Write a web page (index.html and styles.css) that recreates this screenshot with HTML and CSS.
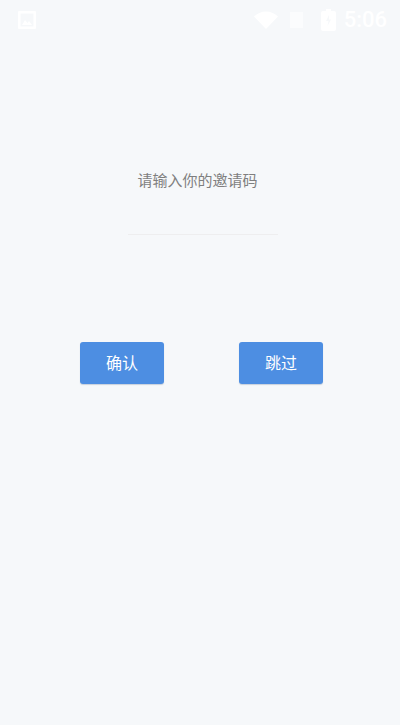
FILE: index.html
```html
<!DOCTYPE html>
<html lang="zh-CN">
<head>
    <meta charset="UTF-8">
    <meta name="viewport" content="width=device-width, initial-scale=1.0">
    <title>邀请码</title>
    <link rel="stylesheet" href="styles.css">
</head>
<body>
    <div class="status-bar">
        <svg class="status-image" width="20" height="20" viewBox="0 0 20 20">
            <path fill="#fff" fill-rule="evenodd" d="M2 1h16a1 1 0 0 1 1 1v16a1 1 0 0 1-1 1H2a1 1 0 0 1-1-1V2a1 1 0 0 1 1-1zm1.500 2.500v13h13v-13z"/>
            <path fill="#fff" d="M5 15l3-5 2.500 3 1.500-2 3 4z"/>
        </svg>
        <div class="status-right">
            <svg class="status-wifi" width="24" height="18" viewBox="0 0 24 18">
                <path fill="#fff" d="M0 5.500C3 2.500 7.500.5 12 .5s9 2 12 5L12 18z"/>
            </svg>
            <svg class="status-sim" width="15" height="18" viewBox="0 0 15 18">
                <path fill="#fff" opacity=".55" d="M1 1h13v16H1z"/>
            </svg>
            <svg class="status-battery" width="15" height="22" viewBox="0 0 15 22">
                <path fill="#fff" fill-rule="evenodd" d="M5 0h5v2h3a2 2 0 0 1 2 2v16a2 2 0 0 1-2 2H2a2 2 0 0 1-2-2V4a2 2 0 0 1 2-2h3zM8 6l-3 6h2.500l-1 5 3.500-6.500H8z"/>
            </svg>
            <span class="status-time">5:06</span>
        </div>
    </div>

    <div class="invite">
        <p class="invite-title">请输入你的邀请码</p>
        <input class="invite-input" type="text">
        <div class="invite-actions">
            <button class="invite-btn" type="button">确认</button>
            <button class="invite-btn" type="button">跳过</button>
        </div>
    </div>
</body>
</html>
```

FILE: styles.css
```css
* {
    margin: 0;
    padding: 0;
    box-sizing: border-box;
}

body {
    width: 400px;
    height: 725px;
    overflow: hidden;
    background: #f6f8fa;
    font-family: "Roboto", "Noto Sans CJK SC", sans-serif;
}

.status-bar {
    height: 40px;
    padding: 8px 13px 0 17px;
    display: flex;
    justify-content: space-between;
    align-items: flex-start;
}

.status-image {
    display: block;
    margin-top: 2px;
}

.status-right {
    display: flex;
    align-items: center;
    height: 24px;
}

.status-wifi {
    margin-right: 11px;
}

.status-sim {
    margin-right: 17px;
}

.status-battery {
    margin-right: 8px;
}

.status-time {
    color: #fff;
    font-size: 22px;
    font-weight: 500;
    line-height: 24px;
}

.invite {
    display: flex;
    flex-direction: column;
    align-items: center;
}

.invite-title {
    margin-top: 131px;
    margin-left: -5px;
    color: #7f7f7f;
    font-size: 15px;
    line-height: 20px;
}

.invite-input {
    display: block;
    width: 150px;
    height: 25px;
    margin-top: 19px;
    margin-left: 5px;
    border: none;
    border-bottom: 1px solid #eeeeef;
    background: transparent;
    outline: none;
}

.invite-actions {
    width: 400px;
    margin-top: 107px;
    padding-left: 80px;
    display: flex;
    gap: 75px;
}

.invite-btn {
    width: 84px;
    height: 42px;
    padding-bottom: 3px;
    border: none;
    border-radius: 3px;
    background: #4d8ee2;
    color: #fff;
    font-family: inherit;
    font-size: 16px;
    box-shadow: 0 1px 1px rgba(60, 90, 130, 0.25);
}
```
